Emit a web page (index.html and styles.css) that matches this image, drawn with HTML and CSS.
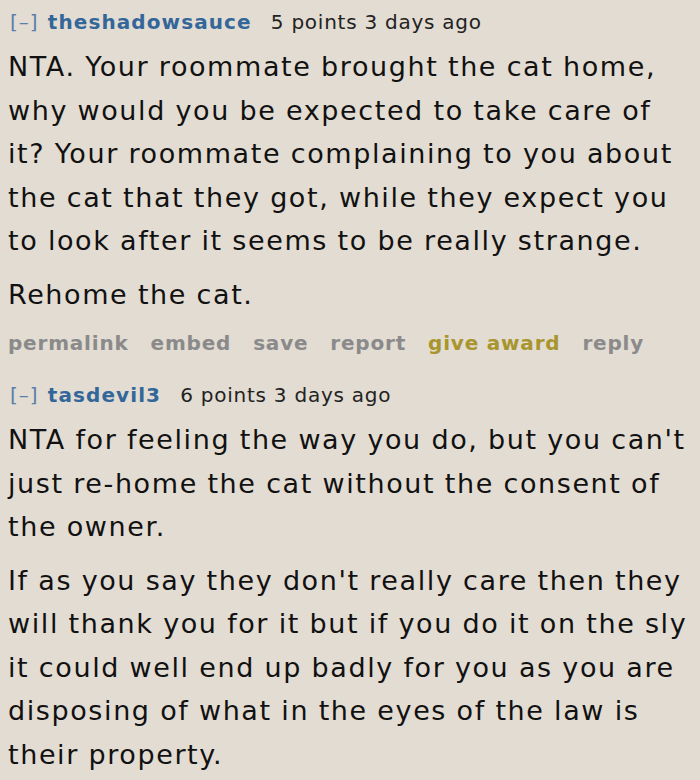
FILE: index.html
```html
<!DOCTYPE html>
<html>
<head>
<meta charset="utf-8">
<link rel="stylesheet" href="styles.css">
</head>
<body>
<div class="comment">
  <div class="tagline">
    <span class="expand">[–]</span>
    <span class="author">theshadowsauce</span>
    <span class="score">5 points</span>
    <span class="time">3 days ago</span>
  </div>
  <div class="md">
    <p>NTA. Your roommate brought the cat home, why would you be expected to take care of it? Your roommate complaining to you about the cat that they got, while they expect you to look after it seems to be really strange.</p>
    <p>Rehome the cat.</p>
  </div>
  <ul class="buttons">
    <li>permalink</li>
    <li>embed</li>
    <li>save</li>
    <li>report</li>
    <li class="award">give award</li>
    <li>reply</li>
  </ul>
</div>
<div class="comment">
  <div class="tagline">
    <span class="expand">[–]</span>
    <span class="author">tasdevil3</span>
    <span class="score">6 points</span>
    <span class="time">3 days ago</span>
  </div>
  <div class="md">
    <p>NTA for feeling the way you do, but you can't just re-home the cat without the consent of the owner.</p>
    <p>If as you say they don't really care then they will thank you for it but if you do it on the sly it could well end up badly for you as you are disposing of what in the eyes of the law is their property.</p>
  </div>
</div>
</body>
</html>
```
FILE: styles.css
```css
html, body {
  margin: 0;
  padding: 0;
  background: #e3dcd2;
}
body {
  font-family: "DejaVu Sans", Verdana, sans-serif;
  color: #111;
  padding: 0 4px 0 8px;
  width: 688px;
}
.tagline {
  font-size: 20px;
  line-height: 24px;
  padding-top: 10px;
  color: #222;
  letter-spacing: 0.75px;
}
.expand {
  color: #5a7fab;
  margin-left: 2px;
  letter-spacing: 1px;
}
.author {
  color: #336699;
  font-weight: bold;
  margin-left: 2px;
  margin-right: 12px;
  letter-spacing: 1.1px;
}
.md {
  font-size: 27px;
  line-height: 43.5px;
  letter-spacing: 1.6px;
  word-spacing: -0.6px;
  margin-top: 11px;
}
.md p {
  margin: 0;
  padding: 0;
}
.md p + p {
  margin-top: 10px;
}
.buttons {
  list-style: none;
  margin: 0;
  padding: 15px 0 0;
  display: flex;
  gap: 22px;
  font-size: 20px;
  line-height: 24px;
  font-weight: bold;
  letter-spacing: 0.8px;
  color: #8a8a8a;
}
.buttons .award {
  color: #a8952e;
}
.comment + .comment {
  margin-top: 18px;
}
```
